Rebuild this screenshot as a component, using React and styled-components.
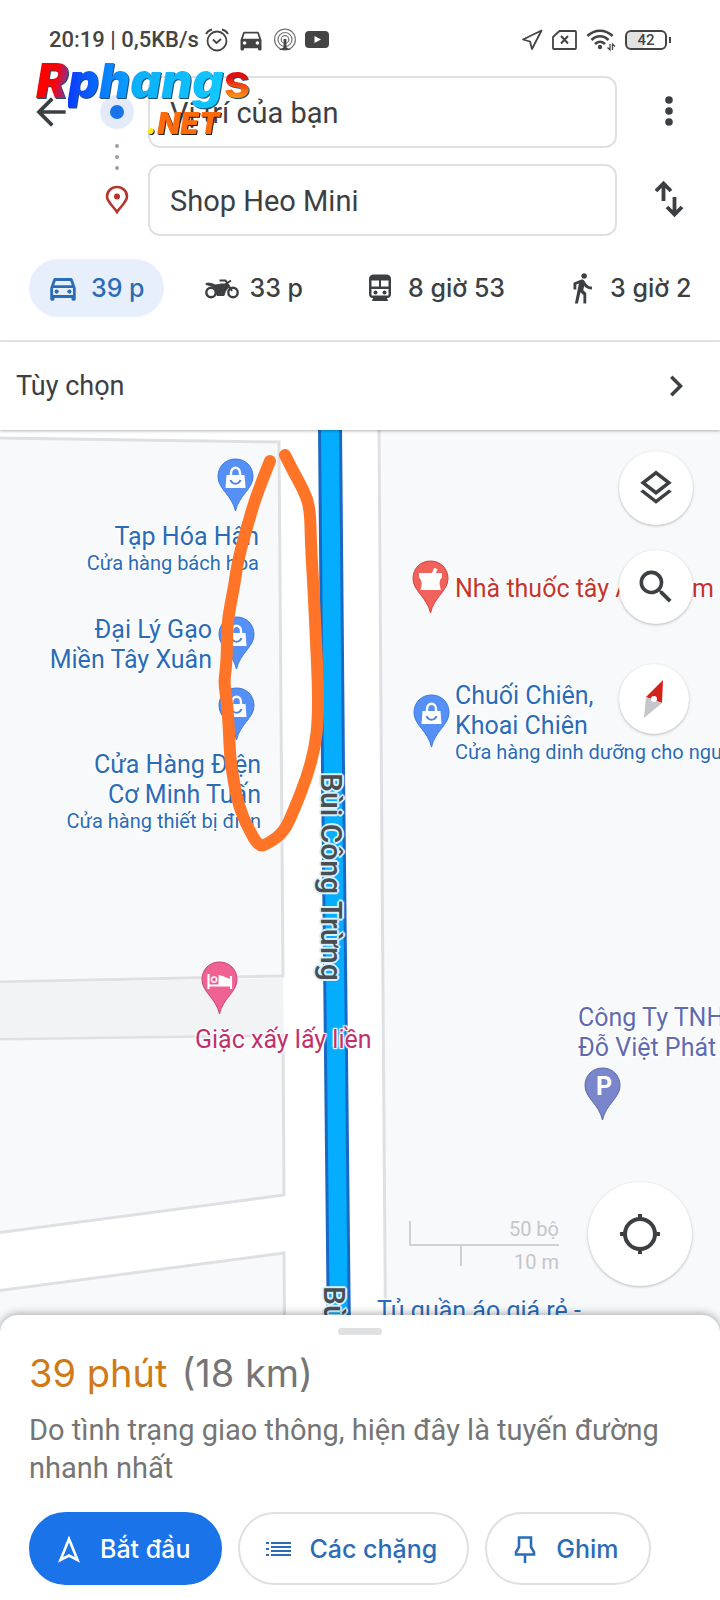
import React from 'react';
import styled, { createGlobalStyle, ThemeProvider } from 'styled-components';
import {
  MdArrowBack,
  MdChevronRight,
  MdDirectionsCar,
  MdDirectionsWalk,
  MdOutlineDirectionsCar,
  MdOutlineLayers,
  MdSearch,
} from 'react-icons/md';

const theme = {
  colors: {
    text: '#3c4043',
    muted: '#757575',
    line: '#dfe0e2',
    primary: '#1a73e8',
    link: '#2a6cb8',
    land: '#f8f9fb',
  },
  fonts: {
    body: 'Roboto, "Noto Sans", sans-serif',
    display: 'Inter, "Noto Sans", sans-serif',
  },
};

const places = [
  {
    id: 'tap-hoa', kind: 'shop', pin: [217, 28], label: [259, 92], align: 'right',
    lines: ['Tạp Hóa Hân'], note: 'Cửa hàng bách hóa',
  },
  {
    id: 'gao', kind: 'shop', pin: [218, 186], label: [212, 185], align: 'right',
    lines: ['Đại Lý Gạo', 'Miền Tây Xuân'],
  },
  {
    id: 'dien', kind: 'shop', pin: [218, 257], label: [261, 320], align: 'right',
    lines: ['Cửa Hàng Điện', 'Cơ Minh Tuấn'], note: 'Cửa hàng thiết bị điện',
  },
  {
    id: 'thuoc', kind: 'pharmacy', pin: [412, 130], label: [455, 144],
    lines: ['Nhà thuốc tây Anh Tâm'],
  },
  {
    id: 'chuoi', kind: 'shop', pin: [413, 264], label: [455, 251],
    lines: ['Chuối Chiên,', 'Khoai Chiên'], note: 'Cửa hàng dinh dưỡng cho người',
  },
  {
    id: 'giac', kind: 'hotel', pin: [201, 531], label: [195, 595],
    lines: ['Giặc xấy lấy liền'],
  },
  {
    id: 'cong-ty', kind: 'parking', pin: [584, 637], label: [578, 573],
    lines: ['Công Ty TNHH', 'Đỗ Việt Phát'],
  },
  {
    id: 'tu', kind: 'shop', label: [377, 866], lines: ['Tủ quần áo giá rẻ -'],
  },
];

const pinColors = {
  shop: ['#5490f5', '#3f78dc', '#2a6cb8'],
  pharmacy: ['#f0625a', '#c9473f', '#c5352c'],
  hotel: ['#f06292', '#c2477a', '#c2306a'],
  parking: ['#7986cb', '#5c69ad', '#5f6bb0'],
};

const loopPoints = [
  [270, 31], [257, 63], [247, 97], [238, 130], [234, 157], [230, 177], [227, 197], [227, 220],
  [226, 238], [224, 253], [227, 272], [229, 300], [230, 327], [234, 353], [239, 377],
  [248, 398], [259, 417], [269, 413], [284, 402], [294, 380], [307, 347], [315, 317],
  [318, 290], [318, 253], [316, 213], [314, 167], [311, 117], [310, 77], [303, 59],
  [293, 41], [285, 25],
];

// rounds a freehand line by bending it through the middle of each segment
function smoothPath(points) {
  const [first, ...rest] = points;
  const last = points[points.length - 1];
  const curves = rest.slice(0, -1).map(([x, y], i) => {
    const [nx, ny] = rest[i + 1];
    return `Q${x} ${y} ${(x + nx) / 2} ${(y + ny) / 2}`;
  });
  return `M${first.join(' ')} ${curves.join(' ')} L${last.join(' ')}`;
}

function PinSymbol({ kind }) {
  if (kind === 'shop') {
    return (
      <g>
        <path d="M9.500 17 H27.500 L28.500 30 H8.500 Z" fill="#fff" />
        <path d="M14 18 V15 C14 8 23 8 23 15 V18" fill="none" stroke="#fff" strokeWidth="2.400" />
        <path d="M13.500 22 C15.500 27 21.500 27 23.500 22" fill="none" stroke="#4a83e6" strokeWidth="2" />
      </g>
    );
  }
  if (kind === 'pharmacy') {
    return (
      <path
        d="M7 13 H20 L22 8 L25.500 9 L24 13 H30 V17.500 C27 20 27 24 29 30 H8.500 C10.500 24 10 20 7 17.500 Z"
        fill="#fff"
      />
    );
  }
  if (kind === 'hotel') {
    return (
      <g>
        <path d="M7.500 13 V28 M7 24.500 H30.500 M30 15 V28" stroke="#fff" strokeWidth="2.200" fill="none" />
        <circle cx="13" cy="18.500" r="2.600" fill="none" stroke="#fff" strokeWidth="1.500" />
        <path d="M17.500 14 C24 15 27 18 30 18 V24.500 H17.500 Z" fill="#fff" />
      </g>
    );
  }
  return <PinText x="20" y="28" textAnchor="middle">P</PinText>;
}

function PlacePin({ kind, at }) {
  const [fill, stroke] = pinColors[kind];
  return (
    <PinIcon viewBox="0 0 37 54" style={{ left: at[0], top: at[1] }}>
      <path
        d="M18.500 1 C8.500 1 1 8.500 1 18.500 C1 31 15 37 18.500 53 C22 37 36 31 36 18.500 C36 8.500 28.500 1 18.500 1 Z"
        fill={fill}
        stroke={stroke}
        strokeWidth="1"
      />
      <PinSymbol kind={kind} />
    </PinIcon>
  );
}

function Place({ place }) {
  const {
    kind, pin, label, align, lines, note,
  } = place;

  return (
    <>
      {pin && <PlacePin kind={kind} at={pin} />}
      <PlaceLabel
        $align={align}
        $color={pinColors[kind][2]}
        style={{ left: label[0], top: label[1] }}
      >
        {lines.map((line) => <PlaceName key={line}>{line}</PlaceName>)}
        {note && <PlaceNote>{note}</PlaceNote>}
      </PlaceLabel>
    </>
  );
}

function StatusBar() {
  return (
    <Status>
      <StatusText>20:19 | 0,5KB/s</StatusText>
      <StatusIcons>
        <svg width="24" height="24" viewBox="0 0 24 24" fill="none" stroke="#444" strokeWidth="1.800">
          <circle cx="12" cy="13" r="9.500" />
          <path d="M8 11.500 L11.500 15 L16 11 M1 6 C2.500 3 4.500 2 7 1.500 M23 6 C21.500 3 19.500 2 17 1.500" />
        </svg>
        <MdDirectionsCar size={28} />
        <svg width="24" height="24" viewBox="0 0 24 24" fill="none" stroke="#777" strokeWidth="1.200">
          <circle cx="12" cy="11.500" r="10.400" />
          <circle cx="12" cy="11.500" r="7" />
          <circle cx="12" cy="11.500" r="3.800" />
          <path d="M12 11 V20" stroke="#444" strokeWidth="2.800" />
          <path d="M6 22 L12 18.500 L18 22 Z" fill="#444" stroke="none" />
        </svg>
        <svg width="24" height="18" viewBox="0 0 24 18">
          <rect width="24" height="17" rx="4" fill="#444" />
          <path d="M9.500 5 L16 8.500 L9.500 12 Z" fill="#fff" />
        </svg>
      </StatusIcons>
      <StatusRight>
        <svg width="22" height="22" viewBox="0 0 22 22" fill="none" stroke="#444" strokeWidth="1.800" strokeLinejoin="round">
          <path d="M20.500 1.500 L2 10.500 L9 12.500 L11 20 Z" />
        </svg>
        <svg width="25" height="20" viewBox="0 0 25 20" fill="none" stroke="#444" strokeWidth="1.800">
          <path d="M7.500 1 H23 Q24 1 24 2 V18 Q24 19 23 19 H2 Q1 19 1 18 V7 Z" />
          <path d="M9 6 L16 13.500 M16 6 L9 13.500" strokeWidth="2" />
        </svg>
        <svg width="30" height="24" viewBox="0 0 30 24" fill="none" stroke="#444" strokeWidth="2.600">
          <path d="M1.500 8 C8.500 1 19.500 1 26.500 8 M5.500 12 C10.500 7 17.500 7 22.500 12 M9 16 C12 13 16 13 19 16" />
          <circle cx="14" cy="19" r="2.200" fill="#444" stroke="none" />
          <path d="M24 16 V22 L21.500 19.500 M26.500 22 V16 L29 18.500" strokeWidth="1.300" />
        </svg>
        <Battery>42</Battery>
      </StatusRight>
    </Status>
  );
}

function Watermark() {
  return (
    <Mark aria-hidden="true">
      <MarkName>
        <MarkGlyph $paint="linear-gradient(100deg, #ff0000 55%, #6a3fb5 95%)">R</MarkGlyph>
        <MarkGlyph $paint="linear-gradient(90deg, #0a3cff, #0a6cff)">p</MarkGlyph>
        <MarkGlyph $paint="linear-gradient(90deg, #0a78ff, #0aa0ff)">h</MarkGlyph>
        <MarkGlyph $paint="linear-gradient(90deg, #0aaef8, #12c8ff)">ang</MarkGlyph>
        <MarkTail>s</MarkTail>
      </MarkName>
      <MarkDomain>
        <MarkDot>.</MarkDot>
        NET
      </MarkDomain>
    </Mark>
  );
}

function SearchHeader() {
  return (
    <Header>
      <BackButton type="button" aria-label="Quay lại">
        <MdArrowBack size={44} />
      </BackButton>
      <RouteMarkers>
        <Origin />
        <svg width="6" height="28" viewBox="0 0 6 28" fill="#9aa0a6">
          <circle cx="3" cy="3" r="2" />
          <circle cx="3" cy="14" r="2" />
          <circle cx="3" cy="25" r="2" />
        </svg>
        <svg width="24" height="29" viewBox="0 0 24 29">
          <path
            d="M12 27 C9 22 2 17 2 11.500 C2 6 6.500 2 12 2 C17.500 2 22 6 22 11.500 C22 17 15 22 12 27 Z"
            fill="#fff"
            stroke="#b5342b"
            strokeWidth="2.600"
          />
          <circle cx="12" cy="11.500" r="3" fill="#b5342b" />
        </svg>
      </RouteMarkers>
      <Fields>
        <Field aria-label="Điểm đi" defaultValue="Vị trí của bạn" />
        <Field aria-label="Điểm đến" defaultValue="Shop Heo Mini" />
      </Fields>
      <SideButtons>
        <IconButton type="button" aria-label="Thêm">
          <svg width="8" height="32" viewBox="0 0 8 32" fill="#3c4043">
            <circle cx="4" cy="5" r="3.800" />
            <circle cx="4" cy="16" r="3.800" />
            <circle cx="4" cy="27" r="3.800" />
          </svg>
        </IconButton>
        <IconButton type="button" aria-label="Đổi chiều">
          <svg width="30" height="38" viewBox="0 0 30 38" fill="none" stroke="#3c4043" strokeWidth="3.800">
            <path d="M9.500 21 V4 M2 11 L9.500 3.500 L17 11" />
            <path d="M20.500 17 V34 M13 27 L20.500 34.500 L28 27" />
          </svg>
        </IconButton>
      </SideButtons>
      <Watermark />
    </Header>
  );
}

function MotorcycleIcon() {
  return (
    <WideIcon width="34" height="22" viewBox="0 0 34 22" fill="none" stroke="#3c4043">
      <circle cx="6" cy="15.500" r="4.700" strokeWidth="2.400" />
      <circle cx="28" cy="15.500" r="4.700" strokeWidth="2.400" />
      <path d="M1 6.500 C4 5.500 7 6.500 10 8 C13 8 14 7 17 7 H21 L24 10 L20.500 14 L19 18.500 H12 L11 13 C9 9.500 5 8.500 1 7.500 Z" fill="#3c4043" strokeWidth="1" />
      <path d="M14.500 3.500 H20.500 L27 14 M20.500 7 L26 3.500" strokeWidth="2" />
    </WideIcon>
  );
}

function TrainIcon() {
  return (
    <svg width="24" height="28" viewBox="0 0 24 28">
      <path d="M5 0.500 H19 Q23 1 23 5 V20 Q23 24 19 24 L20 27 H4 L5 24 Q1 24 1 20 V5 Q1 1 5 0.500 Z" fill="#3c4043" />
      <path d="M3.500 6.500 H11 V12.500 H3.500 Z M13 6.500 H20.500 V12.500 H13 Z M3.500 15 H20.500 V21.500 H3.500 Z" fill="#fff" />
      <circle cx="7.500" cy="18.500" r="2" fill="#3c4043" />
      <circle cx="16.500" cy="18.500" r="2" fill="#3c4043" />
    </svg>
  );
}

const modes = [
  { id: 'car', time: '39 p', icon: <MdOutlineDirectionsCar size={34} /> },
  { id: 'motorcycle', time: '33 p', icon: <MotorcycleIcon /> },
  { id: 'transit', time: '8 giờ 53', icon: <TrainIcon /> },
  { id: 'walk', time: '3 giờ 2', icon: <MdDirectionsWalk size={34} /> },
];

function ModeTabs() {
  return (
    <Modes>
      {modes.map((mode, i) => (
        <Mode key={mode.id} type="button" $active={i === 0}>
          <ModeIcon>{mode.icon}</ModeIcon>
          {mode.time}
        </Mode>
      ))}
    </Modes>
  );
}

function StreetMap() {
  return (
    <MapArea>
      <MapDrawing>
        <g fill={theme.colors.land} stroke="#dfe0e4" strokeWidth="3">
          <path d="M-4 8 L279 12 L283 546 L-4 552 Z" />
          <path d="M-4 609 L283 605 L284 765 L-4 803 Z" />
          <path d="M-4 861 L284 823 L285 960 L-4 960 Z" />
          <path d="M379 -4 L382 430 L386 960 L2400 960 V-4 Z" />
        </g>
        <path d="M0 553 L283 548 L284 604 L0 608 Z" fill="#f1f3f4" />
        <path d="M330 -4 L333 340 L339 910" fill="none" stroke="#1769c5" strokeWidth="24" />
        <path d="M330 -4 L333 340 L339 910" fill="none" stroke="#05adff" strokeWidth="18" />
      </MapDrawing>
      <StreetName style={{ left: 313, top: 343 }}>Bùi Công Trừng</StreetName>
      <StreetName style={{ left: 316, top: 856 }}>Bùi Công Trừng</StreetName>
      {places.map((place) => <Place key={place.id} place={place} />)}
      <MapDrawing>
        {/* hand drawn loop round the shops */}
        <path
          d={smoothPath(loopPoints)}
          fill="none"
          stroke="#ff7427"
          strokeWidth="12"
          strokeLinecap="round"
          strokeLinejoin="round"
        />
      </MapDrawing>
      <MapControls>
        <RoundButton type="button" $size={74} aria-label="Lớp bản đồ">
          <MdOutlineLayers size={42} />
        </RoundButton>
        <RoundButton type="button" $size={74} aria-label="Tìm kiếm">
          <MdSearch size={44} />
        </RoundButton>
        <Compass type="button" $size={70} aria-label="La bàn">
          <svg width="20" height="40" viewBox="0 0 20 40">
            <path d="M19 1 L2 18 L18 24 Z" fill="#d3221c" />
            <path d="M2 18 L0 39 L18 24 Z" fill="#c3c6cb" />
            <circle cx="10" cy="20" r="3" fill="#fff" />
          </svg>
        </Compass>
      </MapControls>
      <Scale>
        <ScaleFeet>50 bộ</ScaleFeet>
        <ScaleMetres>10 m</ScaleMetres>
      </Scale>
      <LocateButton type="button" $size={104} aria-label="Vị trí của tôi">
        <svg width="42" height="42" viewBox="0 0 42 42" fill="none" stroke="#3c4043" strokeWidth="4">
          <circle cx="21" cy="21" r="15" />
          <path d="M21 1 V7 M21 35 V41 M1 21 H7 M35 21 H41" />
        </svg>
      </LocateButton>
    </MapArea>
  );
}

function RouteSheet() {
  return (
    <Sheet>
      <Handle />
      <Summary>
        <Duration>39 phút</Duration>
        <span>(18 km)</span>
      </Summary>
      <Reason>Do tình trạng giao thông, hiện đây là tuyến đường nhanh nhất</Reason>
      <Actions>
        <Action type="button" $filled>
          <svg width="26" height="28" viewBox="0 0 26 28" fill="none" stroke="#fff" strokeWidth="2.600">
            <path d="M13 4 L21.500 25 L13 20.500 L4.500 25 Z" />
          </svg>
          Bắt đầu
        </Action>
        <Action type="button">
          <svg width="26" height="18" viewBox="0 0 26 18" stroke="#2a6cb8" strokeWidth="2.200">
            <path d="M6 3 H26 M6 7 H26 M6 11 H26 M6 15 H26 M1 3 H4 M1 9 H4 M1 15 H4" />
          </svg>
          Các chặng
        </Action>
        <Action type="button">
          <svg width="26" height="28" viewBox="0 0 26 28" fill="none" stroke="#2a6cb8" strokeWidth="2.600">
            <path d="M7 2.500 H19 V12 L22 17 V19.500 H4 V17 L7 12 Z M13 19 V28" />
          </svg>
          Ghim
        </Action>
      </Actions>
    </Sheet>
  );
}

function App() {
  return (
    <ThemeProvider theme={theme}>
      <GlobalStyle />
      <Page>
        <StatusBar />
        <SearchHeader />
        <ModeTabs />
        <Options type="button">
          Tùy chọn
          <MdChevronRight size={42} />
        </Options>
        <StreetMap />
        <RouteSheet />
      </Page>
    </ThemeProvider>
  );
}

const GlobalStyle = createGlobalStyle`
  * {
    box-sizing: border-box;
  }
  body {
    margin: 0;
    background: #fff;
  }
  button {
    font: inherit;
    color: inherit;
    border: 0;
    padding: 0;
    background: none;
    cursor: pointer;
  }
  svg {
    display: block;
    flex: none;
  }
`;

const Page = styled.div`
  display: flex;
  flex-direction: column;
  min-height: 100vh;
  overflow: hidden;
  color: ${(props) => props.theme.colors.text};
  font-family: ${(props) => props.theme.fonts.body};
`;

const Status = styled.div`
  display: flex;
  align-items: center;
  height: 76px;
  padding: 3px 49px 0 49px;
  color: #444;
`;

const StatusText = styled.span`
  font-size: 22px;
  font-weight: 500;
`;

const StatusIcons = styled.div`
  display: flex;
  align-items: center;
  gap: 8px;
  margin-left: 6px;
`;

const StatusRight = styled(StatusIcons)`
  gap: 9px;
  margin-left: auto;
`;

const Battery = styled.span`
  position: relative;
  width: 42px;
  height: 20px;
  margin-right: 4px;
  border: 2px solid #444;
  border-radius: 6px;
  background: linear-gradient(90deg, #e2e2e2 42%, #fff 42%);
  font-size: 15px;
  font-weight: 500;
  line-height: 17px;
  text-align: center;
  &::after {
    content: '';
    position: absolute;
    top: 5px;
    right: -6px;
    width: 2px;
    height: 6px;
    background: #444;
  }
`;

const Header = styled.header`
  position: relative;
  display: grid;
  grid-template-columns: 86px 62px 1fr 103px;
`;

const BackButton = styled.button`
  display: flex;
  align-items: center;
  height: 72px;
  padding-left: 29px;
`;

const RouteMarkers = styled.div`
  display: flex;
  flex-direction: column;
  align-items: center;
  justify-content: space-between;
  padding: 19px 0 22px;
`;

const Origin = styled.span`
  width: 34px;
  height: 34px;
  border: 10px solid #e3ebfa;
  border-radius: 50%;
  background: ${(props) => props.theme.colors.primary};
`;

const Fields = styled.div`
  display: grid;
  gap: 16px;
`;

const Field = styled.input`
  width: 100%;
  height: 72px;
  padding: 2px 20px 0;
  border: 2px solid ${(props) => props.theme.colors.line};
  border-radius: 12px;
  outline: none;
  background: #fff;
  color: inherit;
  font-family: inherit;
  font-size: 29px;
`;

const SideButtons = styled.div`
  display: grid;
  gap: 16px;
`;

const IconButton = styled.button`
  display: flex;
  align-items: center;
  justify-content: center;
`;

const Mark = styled.div`
  position: absolute;
  top: -22px;
  left: 36px;
  width: 220px;
  pointer-events: none;
  font-family: ${(props) => props.theme.fonts.display};
  font-weight: 900;
`;

const MarkName = styled.div`
  font-size: 48px;
  font-style: italic;
  line-height: 54px;
  filter: drop-shadow(1px 1px 0 #24506e);
`;

const MarkGlyph = styled.span`
  background: ${(props) => props.$paint};
  background-clip: text;
  color: transparent;
`;

const MarkTail = styled(MarkGlyph).attrs({ $paint: 'linear-gradient(180deg, #e01010 45%, #ff8a10 75%)' })`
  font-style: normal;
  font-weight: 700;
`;

const MarkDomain = styled.div`
  padding-left: 110px;
  color: #ff6a0a;
  font-size: 30px;
  font-style: italic;
  line-height: 30px;
  filter: drop-shadow(1px 1px 0 #222);
`;

const MarkDot = styled.span`
  color: #ffe920;
`;

const Modes = styled.nav`
  display: flex;
  gap: 24px;
  padding: 23px 0 23px 29px;
  overflow: hidden;
  border-bottom: 2px solid #e8e9ea;
  font-family: ${(props) => props.theme.fonts.display};
  font-size: 25px;
  font-weight: 500;
`;

const Mode = styled.button`
  display: flex;
  flex: none;
  align-items: center;
  gap: 14px;
  height: 58px;
  padding: 0 19px 0 20px;
  border-radius: 29px;
  white-space: nowrap;
  ${(props) => props.$active && `
    background: #e8effc;
    color: ${props.theme.colors.link};
  `}
`;

const ModeIcon = styled.span`
  display: flex;
  justify-content: center;
  width: 28px;
`;

const WideIcon = styled.svg`
  margin: 0 -3px;
`;

const Options = styled.button`
  position: relative;
  z-index: 1;
  display: flex;
  align-items: center;
  justify-content: space-between;
  height: 88px;
  padding: 0 23px 0 16px;
  background: #fff;
  box-shadow: 0 1px 3px rgba(0, 0, 0, 0.3);
  font-size: 27px;
`;

const MapArea = styled.main`
  position: relative;
  flex: 1;
  min-height: 640px;
  overflow: hidden;
  background: #fff;
`;

const MapDrawing = styled.svg`
  position: absolute;
  inset: 0;
  width: 100%;
  height: 100%;
  pointer-events: none;
`;

const halo = `
  text-shadow: 0 0 2px #fff, 1px 1px 1px #fff, -1px -1px 1px #fff,
    1px -1px 1px #fff, -1px 1px 1px #fff, 0 0 3px #fff;
`;

const StreetName = styled.span`
  position: absolute;
  writing-mode: vertical-rl;
  color: #4a4e52;
  font-size: 30px;
  font-weight: 500;
  line-height: 36px;
  white-space: nowrap;
  text-shadow: 2px 0 0 #d5f1ff, -2px 0 0 #d5f1ff, 0 2px 0 #d5f1ff, 0 -2px 0 #d5f1ff,
    1px 1px 0 #d5f1ff, -1px -1px 0 #d5f1ff, 1px -1px 0 #d5f1ff, -1px 1px 0 #d5f1ff;
`;

const PinIcon = styled.svg`
  position: absolute;
  width: 37px;
  height: 54px;
`;

const PinText = styled.text`
  fill: #fff;
  font-family: ${(props) => props.theme.fonts.body};
  font-size: 25px;
  font-weight: 700;
`;

const PlaceLabel = styled.div`
  position: absolute;
  color: ${(props) => props.$color};
  white-space: nowrap;
  ${halo}
  ${(props) => props.$align === 'right' && `
    text-align: right;
    transform: translateX(-100%);
  `}
`;

const PlaceName = styled.div`
  font-size: 25px;
  line-height: 30px;
`;

const PlaceNote = styled.div`
  font-size: 20px;
  line-height: 23px;
`;

const MapControls = styled.div`
  position: absolute;
  top: 21px;
  right: 27px;
  display: flex;
  flex-direction: column;
  gap: 25px;
`;

const RoundButton = styled.button`
  display: flex;
  align-items: center;
  justify-content: center;
  width: ${(props) => props.$size}px;
  height: ${(props) => props.$size}px;
  border-radius: 50%;
  background: #fff;
  box-shadow: 0 1px 3px rgba(0, 0, 0, 0.25);
`;

const Compass = styled(RoundButton)`
  margin-top: 15px;
`;

const LocateButton = styled(RoundButton)`
  position: absolute;
  right: 28px;
  bottom: 45px;
`;

const Scale = styled.div`
  position: absolute;
  right: 161px;
  bottom: 65px;
  width: 150px;
  color: #c4c6c8;
  font-size: 20px;
  text-align: right;
`;

const ScaleFeet = styled.div`
  padding-bottom: 6px;
  border: solid #cfd1d3;
  border-width: 0 0 2px 2px;
  line-height: 17px;
`;

const ScaleMetres = styled.div`
  height: 20px;
  margin-left: 51px;
  border-left: 2px solid #cfd1d3;
  line-height: 32px;
`;

const Sheet = styled.section`
  position: relative;
  margin-top: -16px;
  padding: 13px 29px 15px;
  border-radius: 18px 18px 0 0;
  background: #fff;
  box-shadow: 0 -1px 8px rgba(0, 0, 0, 0.35);
`;

const Handle = styled.div`
  width: 44px;
  height: 7px;
  margin: 0 auto;
  border-radius: 4px;
  background: ${(props) => props.theme.colors.line};
`;

const Summary = styled.h1`
  display: flex;
  gap: 14px;
  margin: 14px 0 0;
  color: ${(props) => props.theme.colors.muted};
  font-family: ${(props) => props.theme.fonts.display};
  font-size: 38px;
  font-weight: 400;
  line-height: 48px;
`;

const Duration = styled.span`
  color: #cf7a16;
`;

const Reason = styled.p`
  margin: 14px 0 25px;
  color: ${(props) => props.theme.colors.muted};
  font-size: 29px;
  line-height: 38px;
`;

const Actions = styled.div`
  display: flex;
  gap: 16px;
`;

const Action = styled.button`
  display: flex;
  align-items: center;
  gap: 18px;
  height: 73px;
  padding: 0 30px 0 25px;
  border: 2px solid ${(props) => (props.$filled ? props.theme.colors.primary : props.theme.colors.line)};
  border-radius: 37px;
  background: ${(props) => (props.$filled ? props.theme.colors.primary : '#fff')};
  color: ${(props) => (props.$filled ? '#fff' : props.theme.colors.link)};
  font-family: ${(props) => props.theme.fonts.display};
  font-size: 25px;
  font-weight: 500;
  white-space: nowrap;
`;

export default App;
